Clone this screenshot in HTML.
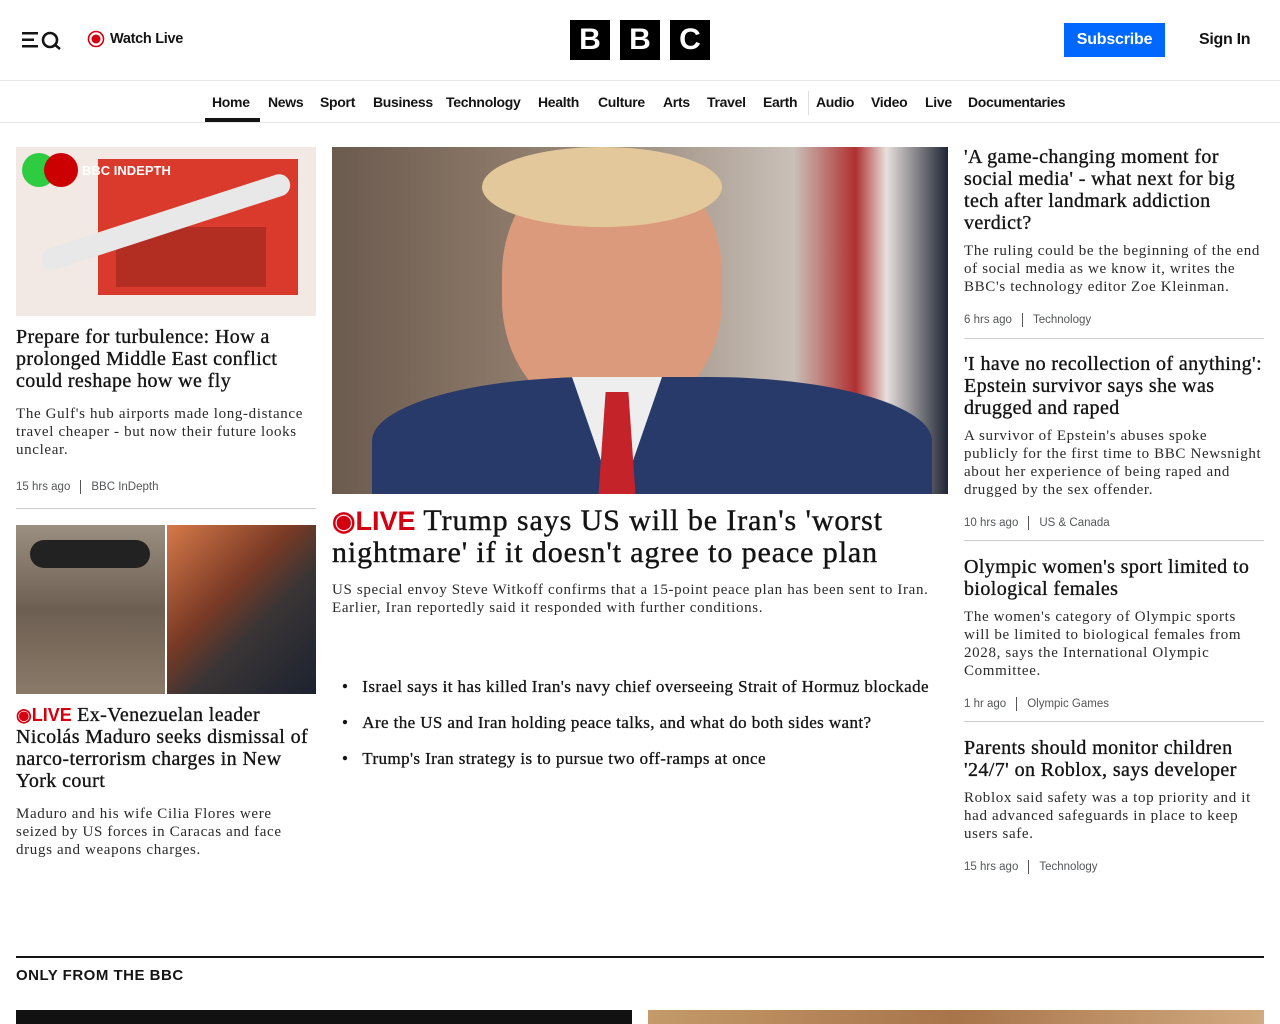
<!DOCTYPE html>
<html><head><meta charset="utf-8"><style>
*{margin:0;padding:0;box-sizing:border-box}
body{width:1280px;height:1024px;overflow:hidden;background:#fff;font-family:"Liberation Sans",sans-serif;color:#141414}
.hdr{height:81px;border-bottom:1px solid #e6e6e6;position:relative}
.nav{height:42px;border-bottom:1px solid #e6e6e6;position:relative}
.nav a{position:absolute;top:13px;font-size:14px;letter-spacing:-0.3px;font-weight:bold;color:#141414;text-decoration:none}
.serif{font-family:"Liberation Serif",serif}
h3{font-family:"Liberation Serif",serif;font-weight:normal;font-size:20px;line-height:22px;color:#141414;letter-spacing:0.4px;-webkit-text-stroke:0.35px #141414}
p.s{font-family:"Liberation Serif",serif;font-size:15px;line-height:18px;color:#2a2a2a;letter-spacing:0.65px}
.meta{font-size:11.5px;color:#545658;display:flex;align-items:center}
.meta .b{width:1px;height:14px;background:#545658;margin:0 10px}
.abs{position:absolute}
.live{color:#d4000f;font-family:"Liberation Sans",sans-serif;font-weight:bold;letter-spacing:0;-webkit-text-stroke:0}
.hr{position:absolute;height:1px;background:#ccc}
</style></head><body>
<div class="hdr">
 <svg class="abs" style="left:22px;top:30px" width="40" height="20" viewBox="0 0 40 20"><rect x="0" y="2" width="16" height="2.5" fill="#141414"/><rect x="0" y="8.5" width="12" height="2.5" fill="#141414"/><rect x="0" y="15" width="16" height="2.5" fill="#141414"/><circle cx="28" cy="10" r="7" fill="none" stroke="#141414" stroke-width="2.6"/><line x1="32" y1="14" x2="38" y2="19" stroke="#141414" stroke-width="2.6"/></svg>
 <svg class="abs" style="left:87px;top:30px" width="18" height="18"><circle cx="9" cy="9" r="7.5" fill="none" stroke="#d4000f" stroke-width="1.6"/><circle cx="9" cy="9" r="4.5" fill="#d4000f"/></svg>
 <div class="abs" style="left:110px;top:31px;font-size:14.5px;font-weight:bold;letter-spacing:-0.3px">Watch Live</div>
 <div class="abs" style="left:570px;top:20px;display:flex;gap:10px">
  <div style="width:40px;height:40px;background:#000;color:#fff;font-weight:bold;font-size:30px;text-align:center;line-height:40px">B</div>
  <div style="width:40px;height:40px;background:#000;color:#fff;font-weight:bold;font-size:30px;text-align:center;line-height:40px">B</div>
  <div style="width:40px;height:40px;background:#000;color:#fff;font-weight:bold;font-size:30px;text-align:center;line-height:40px">C</div>
 </div>
 <div class="abs" style="left:1064px;top:23px;width:101px;height:34px;background:#0068ff;color:#fff;font-size:16px;font-weight:bold;text-align:center;line-height:34px;letter-spacing:-0.2px">Subscribe</div>
 <div class="abs" style="left:1199px;top:31px;font-size:16px;font-weight:bold;letter-spacing:-0.3px">Sign In</div>
</div>
<div class="nav">
 <a style="left:212px">Home</a><div class="abs" style="left:205px;top:37px;width:55px;height:4px;background:#141414"></div>
 <a style="left:268px">News</a><a style="left:320px">Sport</a><a style="left:373px">Business</a><a style="left:446px">Technology</a><a style="left:538px">Health</a><a style="left:598px">Culture</a><a style="left:663px">Arts</a><a style="left:707px">Travel</a><a style="left:763px">Earth</a>
 <div class="abs" style="left:808px;top:10px;width:1px;height:24px;background:#ddd"></div>
 <a style="left:816px">Audio</a><a style="left:871px">Video</a><a style="left:925px">Live</a><a style="left:968px">Documentaries</a>
</div>

<!-- left column -->
<div class="abs" style="left:16px;top:147px;width:300px;height:169px;background:#f3e9e4;overflow:hidden">
 <div class="abs" style="left:82px;top:12px;width:200px;height:136px;background:#d93a2b"></div>
 <div class="abs" style="left:100px;top:80px;width:150px;height:60px;background:#8b2019;opacity:.5"></div>
 <div class="abs" style="left:20px;top:64px;width:260px;height:22px;background:#e8e8e8;border-radius:12px;transform:rotate(-18deg)"></div>
 <div class="abs" style="left:6px;top:6px;width:34px;height:34px;border-radius:50%;background:#2ecc40"></div>
 <div class="abs" style="left:28px;top:6px;width:34px;height:34px;border-radius:50%;background:#c00"></div>
 <div class="abs" style="left:66px;top:16px;color:#fff;font-weight:bold;font-size:13px">BBC INDEPTH</div>
</div>
<h3 class="abs" style="left:16px;top:326px;width:300px">Prepare for turbulence: How a prolonged Middle East conflict could reshape how we fly</h3>
<p class="s abs" style="left:16px;top:405px;width:300px">The Gulf's hub airports made long-distance travel cheaper - but now their future looks unclear.</p>
<div class="meta abs" style="left:16px;top:480px">15 hrs ago<span class="b"></span>BBC InDepth</div>
<div class="hr" style="left:16px;top:508px;width:300px"></div>
<div class="abs" style="left:16px;top:525px;width:149px;height:169px;background:linear-gradient(180deg,#9a8f80,#6d5f52 50%,#8a7a68)"></div>
<div class="abs" style="left:30px;top:540px;width:120px;height:28px;background:#222;border-radius:14px"></div>
<div class="abs" style="left:167px;top:525px;width:149px;height:169px;background:linear-gradient(135deg,#d6794a,#7a3a25 40%,#3a3535 60%,#1c2230)"></div>
<h3 class="abs" style="left:16px;top:704px;width:300px"><span class="live" style="font-size:18px">◉LIVE</span> Ex-Venezuelan leader Nicolás Maduro seeks dismissal of narco-terrorism charges in New York court</h3>
<p class="s abs" style="left:16px;top:805px;width:300px">Maduro and his wife Cilia Flores were seized by US forces in Caracas and face drugs and weapons charges.</p>

<!-- center -->
<div class="abs" style="left:332px;top:147px;width:616px;height:347px;overflow:hidden;background:linear-gradient(90deg,#6b5a4e 0%,#8d7a6a 30%,#a89a8e 55%,#c9c0b8 75%,#b03030 85%,#e8e0dc 90%,#1e2433 100%)">
 <div class="abs" style="left:170px;top:10px;width:220px;height:260px;border-radius:45%;background:#dc9a7c"></div>
 <div class="abs" style="left:150px;top:0px;width:240px;height:80px;border-radius:50%;background:#e2c89a"></div>
 <div class="abs" style="left:40px;top:230px;width:560px;height:160px;border-radius:40% 40% 0 0;background:#283a6a"></div>
 <div class="abs" style="left:240px;top:230px;width:90px;height:130px;background:#eee;clip-path:polygon(0 0,100% 0,50% 100%)"></div>
 <div class="abs" style="left:266px;top:245px;width:38px;height:110px;background:#c4232a;clip-path:polygon(20% 0,80% 0,100% 100%,0 100%)"></div>
</div>
<div class="abs serif" style="left:332px;top:505px;width:620px;font-size:30px;line-height:32px;letter-spacing:0.9px;-webkit-text-stroke:0.4px #141414"><span class="live" style="font-size:27px">◉LIVE</span> Trump says US will be Iran's 'worst nightmare' if it doesn't agree to peace plan</div>
<p class="s abs" style="left:332px;top:581px;width:616px">US special envoy Steve Witkoff confirms that a 15-point peace plan has been sent to Iran. Earlier, Iran reportedly said it responded with further conditions.</p>
<div class="abs serif" style="left:342px;top:669px;font-size:17px;line-height:36px;letter-spacing:0.4px;-webkit-text-stroke:0.3px #141414">
 <div>•&nbsp;&nbsp;&nbsp;Israel says it has killed Iran's navy chief overseeing Strait of Hormuz blockade</div>
 <div>•&nbsp;&nbsp;&nbsp;Are the US and Iran holding peace talks, and what do both sides want?</div>
 <div>•&nbsp;&nbsp;&nbsp;Trump's Iran strategy is to pursue two off-ramps at once</div>
</div>

<!-- right -->
<h3 class="abs" style="left:964px;top:146px;width:300px">'A game-changing moment for social media' - what next for big tech after landmark addiction verdict?</h3>
<p class="s abs" style="left:964px;top:242px;width:300px">The ruling could be the beginning of the end of social media as we know it, writes the BBC's technology editor Zoe Kleinman.</p>
<div class="meta abs" style="left:964px;top:313px">6 hrs ago<span class="b"></span>Technology</div>
<div class="hr" style="left:964px;top:338px;width:300px"></div>
<h3 class="abs" style="left:964px;top:353px;width:300px">'I have no recollection of anything': Epstein survivor says she was drugged and raped</h3>
<p class="s abs" style="left:964px;top:427px;width:300px">A survivor of Epstein's abuses spoke publicly for the first time to BBC Newsnight about her experience of being raped and drugged by the sex offender.</p>
<div class="meta abs" style="left:964px;top:516px">10 hrs ago<span class="b"></span>US &amp; Canada</div>
<div class="hr" style="left:964px;top:540px;width:300px"></div>
<h3 class="abs" style="left:964px;top:556px;width:300px">Olympic women's sport limited to biological females</h3>
<p class="s abs" style="left:964px;top:608px;width:300px">The women's category of Olympic sports will be limited to biological females from 2028, says the International Olympic Committee.</p>
<div class="meta abs" style="left:964px;top:697px">1 hr ago<span class="b"></span>Olympic Games</div>
<div class="hr" style="left:964px;top:721px;width:300px"></div>
<h3 class="abs" style="left:964px;top:737px;width:300px">Parents should monitor children '24/7' on Roblox, says developer</h3>
<p class="s abs" style="left:964px;top:789px;width:300px">Roblox said safety was a top priority and it had advanced safeguards in place to keep users safe.</p>
<div class="meta abs" style="left:964px;top:860px">15 hrs ago<span class="b"></span>Technology</div>

<div class="abs" style="left:16px;top:956px;width:1248px;height:2px;background:#141414"></div>
<div class="abs" style="left:16px;top:967px;font-size:15px;font-weight:bold;letter-spacing:.5px">ONLY FROM THE BBC</div>
<div class="abs" style="left:16px;top:1010px;width:616px;height:14px;background:#111"></div>
<div class="abs" style="left:648px;top:1010px;width:616px;height:14px;background:linear-gradient(90deg,#c49a6a,#a8744a,#d2aa80)"></div>
</body></html>
